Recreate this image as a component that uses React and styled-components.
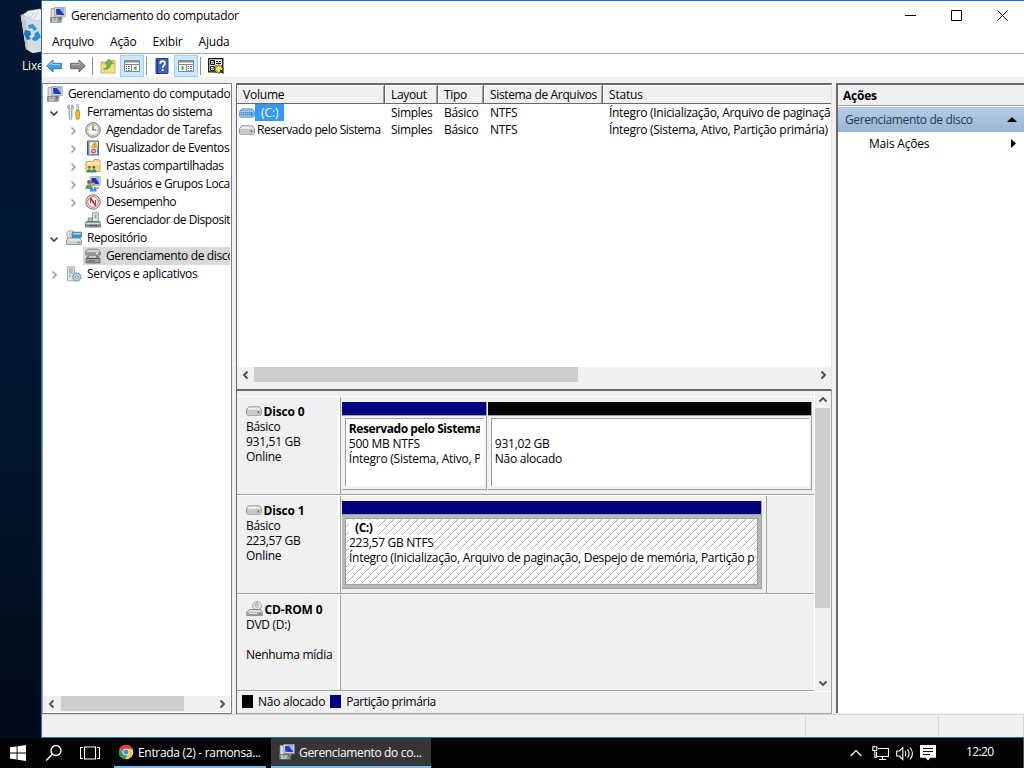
import React from 'react';
import styled, { createGlobalStyle } from 'styled-components';

const tree = [
    { label: 'Gerenciamento do computador', icon: 'computer', level: 0, ls: -0.36 },
    { label: 'Ferramentas do sistema', icon: 'tools', level: 1, arrow: 'open', ls: -0.46 },
    { label: 'Agendador de Tarefas', icon: 'clock', level: 2, arrow: 'closed', ls: -0.4 },
    { label: 'Visualizador de Eventos', icon: 'events', level: 2, arrow: 'closed', ls: -0.38 },
    { label: 'Pastas compartilhadas', icon: 'shared', level: 2, arrow: 'closed', ls: -0.42 },
    { label: 'Usuários e Grupos Locais', icon: 'users', level: 2, arrow: 'closed', ls: -0.4 },
    { label: 'Desempenho', icon: 'perf', level: 2, arrow: 'closed', ls: -0.5 },
    { label: 'Gerenciador de Dispositivos', icon: 'devices', level: 2, ls: -0.46 },
    { label: 'Repositório', icon: 'storage', level: 1, arrow: 'open', ls: -0.4 },
    { label: 'Gerenciamento de disco', icon: 'diskmgmt', level: 2, selected: true, ls: -0.36 },
    { label: 'Serviços e aplicativos', icon: 'services', level: 1, arrow: 'closed' },
]

const columns = ['Volume', 'Layout', 'Tipo', 'Sistema de Arquivos', 'Status']

const volumes = [
    { name: '(C:)', layout: 'Simples', type: 'Básico', fs: 'NTFS', status: 'Íntegro (Inicialização, Arquivo de paginação', selected: true },
    { name: 'Reservado pelo Sistema', layout: 'Simples', type: 'Básico', fs: 'NTFS', status: 'Íntegro (Sistema, Ativo, Partição primária)' },
]

function Icon({ name }) {
    return (
        <Svg16 viewBox="0 0 16 16">
            {icons[name]}
        </Svg16>
    )
}

const icons = {
    computer: <>
        <path d="M1 1.5h4v9H1z" fill="#d8dcdc" stroke="#89908f" strokeWidth=".7" />
        <path d="M4.5.6 15.3.2v9.6L5 9.2z" fill="#dcdcd2" stroke="#92958e" strokeWidth=".7" />
        <path d="M6 1.9 14 1.5v6.8L6.3 7.7z" fill="#1f38c4" />
        <path d="M9.5 1.7 14 1.5v6z" fill="#92b6ff" />
        <path d="M8 10h4l1 2H7z" fill="#929b99" />
        <path d="M.5 10.5h10.8v4.8H.5z" fill="#8c9898" stroke="#66716f" strokeWidth=".6" />
        <path d="M2 12h2M5.5 12h2M2 14h5.5" stroke="#e8efed" />
        <path d="M9 12h1.5" stroke="#3d4746" />
    </>,
    tools: <>
        <path d="M3.3.8v3.4l1.2.9 1.3-.9V.8c1.8.8 2.3 3.5.1 5.1v8.3c0 1.6-2.7 1.6-2.7 0V5.9C.9 4.5 1.5 1.5 3.3.8z" fill="#e3e6e7" stroke="#747e82" strokeWidth=".8" />
        <path d="M10.8.5h1.6v6h-1.6z" fill="#eef0f1" stroke="#7a8388" strokeWidth=".6" />
        <path d="M10.3 6.5h2.8l.5 3-.6 5.5h-2.7L9.7 9z" fill="#ffbe18" stroke="#b97507" strokeWidth=".8" />
    </>,
    clock: <>
        <circle cx="8" cy="8" r="7.3" fill="#d7d7d2" stroke="#777b7b" />
        <circle cx="8" cy="8" r="5.4" fill="#faf8e8" stroke="#b8ad91" strokeWidth=".7" />
        <path d="M8 3.6V8h3.5" stroke="#3b5d83" strokeWidth="1.2" fill="none" />
        <path d="M8 2.7v.8M8 12.5v.8M2.8 8h.8M12.5 8h.8" stroke="#87765a" strokeWidth=".8" />
    </>,
    events: <>
        <path d="M2.5 1h11v14h-11z" fill="#a9c7e6" stroke="#4a6687" />
        <path d="M5 2h8v12H5z" fill="#dfebf6" />
        <path d="M2 3h2M2 5h2M2 7h2M2 9h2M2 11h2M2 13h2" stroke="#354b66" />
        <path d="m9.8 1.6 3.3 5.8H6.5z" fill="#ffd630" stroke="#c98d00" strokeWidth=".6" />
        <path d="M9.8 3.6v2M9.8 6v.8" stroke="#40360e" strokeWidth=".8" />
        <circle cx="8.5" cy="11" r="2.6" fill="#d65a55" />
        <path d="m7.4 9.9 2.2 2.2m0-2.2-2.2 2.2" stroke="#fff" strokeWidth=".8" />
        <path d="M12 8.5h2v5h-2z" fill="#557fb9" />
    </>,
    shared: <>
        <path d="M1 3.5h7l1-2h5l1 2v10H1z" fill="#f6d785" stroke="#be9544" strokeWidth=".8" />
        <path d="M2 4.5h12.5v2H2z" fill="#fff0bd" />
        <circle cx="4.3" cy="9.3" r="1.4" fill="#965f35" />
        <circle cx="8.8" cy="9.3" r="1.4" fill="#78502f" />
        <path d="M1.6 14.4c0-4.3 5.2-4.3 5.2 0z" fill="#3d9254" />
        <path d="M6.4 14.4c0-4.3 5.2-4.3 5.2 0z" fill="#3e77bc" />
    </>,
    users: <>
        <path d="M5 .8 15.2.4v9.3L5 9.2z" fill="#d8d9d2" stroke="#989c94" strokeWidth=".7" />
        <path d="M6.4 2 14 1.7v6.6L6.5 7.9z" fill="#1733bd" />
        <path d="m10.3 1.8 3.7-.1v5.5z" fill="#8fb5ff" />
        <path d="M9 11h5v2H9z" fill="#a9aca7" />
        <circle cx="4" cy="6" r="2" fill="#9a622b" />
        <path d="M.4 13c0-6.4 7.2-6.4 7.2 0z" fill="#4fa377" />
        <circle cx="8.3" cy="8.3" r="2" fill="#d29d68" />
        <path d="M4.8 15.5c0-6 7-6 7 0z" fill="#4b88d0" />
        <path d="m7.5 11 .8 3 .8-3z" fill="#fff" />
    </>,
    perf: <>
        <circle cx="8" cy="8" r="7.2" fill="#e8e6e3" stroke="#71706e" />
        <circle cx="8" cy="8" r="5.3" fill="#fff" stroke="#b5504e" strokeWidth=".8" />
        <path d="M4.8 4.6 6 5v3.6l-1.2.8z" fill="#cd3833" />
        <path d="m9.8 5.6 1.4.6v3.2l-1.2.8z" fill="#cd3833" />
        <path d="m5.4 4 5.2 7.8" stroke="#cd3833" strokeWidth="1.6" />
        <path d="m5.4 4 5.2 7.8" stroke="#2d3031" strokeWidth=".7" />
    </>,
    devices: <>
        <path d="M7.5.8h5.8v9H7.5z" fill="#e1ebe8" stroke="#77827e" strokeWidth=".8" />
        <path d="M9.3 2.5h2.3v4H9.3z" fill="#7cbd88" />
        <path d="M3.2 6h4v4h-4z" fill="#bbc3c5" stroke="#727b7e" strokeWidth=".8" />
        <path d="M1.5 9.5h13l1 2v3.5H.5v-3.5z" fill="#909ba0" stroke="#5d686c" strokeWidth=".8" />
        <path d="M1.3 11.4h13.4" stroke="#dfe7e9" />
        <path d="M4 13.5h8" stroke="#4f5b60" />
    </>,
    storage: <>
        <circle cx="4.6" cy="4.5" r="3.9" fill="#dfe5e2" stroke="#929b96" strokeWidth=".8" />
        <circle cx="4.6" cy="4.5" r="1.2" fill="#fff" stroke="#939a96" strokeWidth=".7" />
        <path d="M6.2 2.2h9.3v5.2H6.2z" fill="#2c9bd2" stroke="#5a7786" strokeWidth=".8" />
        <path d="M7 3h7.8v1.5H7z" fill="#94def7" />
        <path d="M2 8h11.5l2 3v3.5H.5V11z" fill="#e4e6e5" stroke="#7c8280" strokeWidth=".8" />
        <path d="M1 11h14v3H1z" fill="#ced2d1" />
        <path d="M11.5 12.5h2" stroke="#35b24a" strokeWidth="1.5" />
    </>,
    diskmgmt: <>
        <path d="M3 1.2h10l2.3 2.5V7H.8V3.7z" fill="#d2d4d4" stroke="#686b6b" strokeWidth=".8" />
        <path d="M1 4.2h14v2.5H1z" fill="#8d9291" />
        <path d="M11 5.4h2" stroke="#e9ffe9" strokeWidth="1.2" />
        <path d="M3 8h10l2 2.5V15H1v-4.5z" fill="#9a9e9d" stroke="#595c5c" strokeWidth=".8" />
        <path d="M2 10.5h12M3.5 13h6" stroke="#555b59" />
        <path d="M4 8.8h7" stroke="#f6f6f6" />
    </>,
    services: <>
        <path d="M1.5.8h7v14h-7z" fill="#e2e5e5" stroke="#949c9e" strokeWidth=".8" />
        <path d="M3 3h4M3 5h4M3 7h4" stroke="#869195" />
        <path d="M3 10h2" stroke="#50ad61" />
        <circle cx="10.8" cy="11" r="4.1" fill="#8eb4d2" stroke="#7294ad" strokeWidth="1.3" strokeDasharray="1.5 1" />
        <circle cx="10.8" cy="11" r="3.2" fill="#b8d4e8" />
        <circle cx="10.8" cy="11" r="1.4" fill="#fff" stroke="#6389a6" strokeWidth=".8" />
    </>,
    back: <>
        <path d="M.7 8 7 2v3.3h8.3v5.4H7V14z" fill="#35a5e6" stroke="#3a6f9c" />
        <path d="M2.5 7.6 6.2 4v2.4h8" stroke="#9fdcf8" fill="none" />
    </>,
    forward: <>
        <path d="M15.3 8 9 2v3.3H.7v5.4H9V14z" fill="#8b8b8b" stroke="#5f5f5f" />
        <path d="M1.5 6.4h8.2V4l3.6 3.6" stroke="#b7b7b7" fill="none" />
    </>,
    up: <>
        <path d="M1 4h6l1-1.5h7V15H1z" fill="#e9c76b" stroke="#c39b44" strokeWidth=".8" />
        <path d="M1.5 6.5h13v8h-13z" fill="#f4dc8c" />
        <path d="M3.3 11c3-.4 4-2 4-5H5L9 1l4 4.7h-2.2C10.5 9.5 8 12 3.3 11z" fill="#62bd38" stroke="#4a9a35" strokeWidth=".7" />
    </>,
    treeview: <>
        <path d="M.5 2.5h15v11H.5z" fill="#fff" stroke="#85888c" />
        <path d="M1 3h14v1.5H1z" fill="#8c8f94" />
        <path d="M1 6.5h14M7.5 6v8" stroke="#85888c" />
        <path d="M2 8.5h1M4 8.5h2M2 10.5h1M4 10.5h2M2 12.5h1M4 12.5h2" stroke="#6f747b" />
        <path d="M12.500 7.500v5L9.500 10z" fill="#3ca63e" />
    </>,
    actionview: <>
        <path d="M.5 2.5h15v11H.5z" fill="#fff" stroke="#85888c" />
        <path d="M1 3h14v1.5H1z" fill="#8c8f94" />
        <path d="M1 6.5h14M8.5 6v8" stroke="#85888c" />
        <path d="M10 8.5h1M12 8.5h2M10 10.5h1M12 10.5h2M10 12.5h1M12 12.5h2" stroke="#6f747b" />
        <path d="M3.500 7.500v5l3-2.500z" fill="#3ca63e" />
    </>,
    help: <>
        <path d="M2 .5h12v15H2z" fill="#3d5fc0" stroke="#263d8c" />
        <path d="M3.5 1v14" stroke="#263d8c" />
        <path d="M6.2 5.7c0-3.4 4.8-3.2 4.8-.4 0 2.3-2.4 2-2.4 4.7" stroke="#fff" strokeWidth="1.7" fill="none" />
        <path d="M7.7 11.2h1.8V13H7.7z" fill="#fff" />
    </>,
    settings: <>
        <path d="M.7.7h14.1v13.1H.7z" fill="#eee" stroke="#111" strokeWidth="1.3" />
        <path d="M2.5 2.5h4v4h-4zM2.5 8.5h4v4h-4z" fill="#fff" stroke="#111" />
        <path d="m3.500 4.300 1 1 1.500-2M3.500 10.300l1 1 1.500-2M8 3.500h2M11 3.500h2M8 5.500h5" stroke="#111" fill="none" />
        <path d="m7.700 7 2.100 1.600.8-2.100 1.300 1.900 2.300-1.400-.6 2.600 2.200 1.200-2.200 1.200.9 2.500-2.500-.8-1.200 2-1.100-2-2.300.9.7-2.500-1.900-1.300 1.900-1z" fill="#fff33b" stroke="#181800" strokeWidth=".6" />
        <path d="m12 12 3.500 3.500" stroke="#181800" strokeWidth="1.200" />
    </>,
}

function Drive({ blue }) {
    return (
        <DriveSvg viewBox="0 0 16 10">
            <path d="M2.8.8h10.5l2.1 3v4.5l-1 .9H1.500l-1-.9V3.800z" fill={blue ? '#a5cdee' : '#eeeeec'} stroke={blue ? '#4f8fc4' : '#777'} strokeWidth=".8" />
            <path d="M1 3.800h14v4.700H1z" fill={blue ? '#7db4e2' : '#c7c8c7'} />
            <path d="M12.500 5v2.500" stroke={blue ? '#2b719f' : '#429447'} strokeWidth="1.500" />
            {blue && <path d="M2 2.500h12M2 4.500h12M2 6.500h12" stroke="#4a90d0" strokeDasharray="1 1" />}
        </DriveSvg>
    )
}

function CdDrive() {
    return (
        <CdSvg viewBox="0 0 17 16">
            <circle cx="11" cy="5" r="4.5" fill="#e1e3e0" stroke="#9da19e" strokeWidth=".8" />
            <path d="M11 .8v3M8 2.4l2 2" stroke="#7bc181" />
            <circle cx="11" cy="5" r="1.3" fill="#fff" stroke="#8f9691" strokeWidth=".7" />
            <path d="M3.5 8.5h11l1.8 2.5v3.6H.7V11z" fill="#dededc" stroke="#6f7371" strokeWidth=".8" />
            <path d="M1.2 11.4h14.6V14H1.2z" fill="#9ea2a0" />
            <path d="M3 12.5h8" stroke="#e3e6e4" />
            <path d="M13 12.5h1.8" stroke="#21a739" strokeWidth="1.4" />
        </CdSvg>
    )
}

const arrows = {
    left: 'M6.5 1.5 3 5l3.5 3.5',
    right: 'M3.5 1.5 7 5 3.5 8.5',
    up: 'M1.5 6.5 5 3l3.5 3.5',
    down: 'M1.5 3.5 5 7l3.5-3.5',
}

function Chevron({ dir, color = '#505050', thick = 1.9 }) {
    return (
        <svg width="10" height="10" viewBox="0 0 10 10">
            <path d={arrows[dir]} fill="none" stroke={color} strokeWidth={thick} />
        </svg>
    )
}

function Tree() {
    return (
        <TreePane>
            <TreeList>
                {tree.map((item) => (
                    <TreeRow key={item.label} $level={item.level}>
                        {item.level > 0 && (
                            <Twisty>
                                {item.arrow && <Chevron dir={item.arrow === 'open' ? 'down' : 'right'} color={item.arrow === 'open' ? '#404040' : '#a0a0a0'} thick={1.7} />}
                            </Twisty>
                        )}
                        <TreeItem $selected={item.selected}>
                            <Icon name={item.icon} />
                            <TreeLabel $ls={item.ls}>{item.label}</TreeLabel>
                        </TreeItem>
                    </TreeRow>
                ))}
            </TreeList>
            <HScroll>
                <HArrow><Chevron dir="left" /></HArrow>
                <HTrack><HThumb $width={123} $offset={1} /></HTrack>
                <HArrow><Chevron dir="right" /></HArrow>
            </HScroll>
        </TreePane>
    )
}

function VolumeList() {
    return (
        <VolumePane>
            <VolumeGrid>
                {columns.map((c) => <HeadCell key={c}>{c}</HeadCell>)}
            </VolumeGrid>
            {volumes.map((v) => (
                <VolumeGrid key={v.name}>
                    <NameCell>
                        <Drive blue={v.selected} />
                        <VolumeName $selected={v.selected}>{v.name}</VolumeName>
                    </NameCell>
                    <Cell>{v.layout}</Cell>
                    <Cell>{v.type}</Cell>
                    <Cell>{v.fs}</Cell>
                    <Cell>{v.status}</Cell>
                </VolumeGrid>
            ))}
            <Spacer />
            <HScroll>
                <HArrow><Chevron dir="left" /></HArrow>
                <HTrack><HThumb $width={324} $offset={0} /></HTrack>
                <HArrow><Chevron dir="right" /></HArrow>
            </HScroll>
        </VolumePane>
    )
}

function Hatch() {
    return (
        <HatchSvg>
            <defs>
                <pattern id="hatch" width="8" height="8" patternUnits="userSpaceOnUse">
                    <path d="M-1 9 9-1M-1 1 1-1M7 9l2-2" stroke="#8c8c8c" strokeWidth=".75" />
                </pattern>
            </defs>
            <rect width="100%" height="100%" fill="url(#hatch)" />
        </HatchSvg>
    )
}

function DiskView() {
    return (
        <DiskPane>
            <DiskArea>
                <DiskRows>
                    <DiskRow>
                        <DiskInfo>
                            <DiskTitle><Drive /><b>Disco 0</b></DiskTitle>
                            <p>Básico</p>
                            <p>931,51 GB</p>
                            <p>Online</p>
                        </DiskInfo>
                        <Partitions $width={474}>
                            <Partition $width={145}>
                                <Bar $color="#000080" />
                                <PartBox>
                                    <PartText>
                                        <p><b>Reservado pelo Sistema</b></p>
                                        <p>500 MB NTFS</p>
                                        <p>Íntegro (Sistema, Ativo, Partição</p>
                                    </PartText>
                                </PartBox>
                            </Partition>
                            <Partition $width={324}>
                                <Bar $color="#000" />
                                <PartBox>
                                    <PartText>
                                        <p>&nbsp;</p>
                                        <p>931,02 GB</p>
                                        <p>Não alocado</p>
                                    </PartText>
                                </PartBox>
                            </Partition>
                        </Partitions>
                    </DiskRow>
                    <DiskRow>
                        <DiskInfo>
                            <DiskTitle><Drive /><b>Disco 1</b></DiskTitle>
                            <p>Básico</p>
                            <p>223,57 GB</p>
                            <p>Online</p>
                        </DiskInfo>
                        <Partitions $width={426} $edge>
                            <Partition $width={420}>
                                <Bar $color="#000080" />
                                <PartBox $active>
                                    <Hatch />
                                    <PartText $active>
                                        <p><DriveLetter>(C:)</DriveLetter></p>
                                        <p>223,57 GB NTFS</p>
                                        <p>Íntegro (Inicialização, Arquivo de paginação, Despejo de memória, Partição primária)</p>
                                    </PartText>
                                </PartBox>
                            </Partition>
                        </Partitions>
                    </DiskRow>
                    <DiskRow>
                        <DiskInfo>
                            <DiskTitle><CdDrive /><b>CD-ROM 0</b></DiskTitle>
                            <p>DVD (D:)</p>
                            <p>&nbsp;</p>
                            <p>Nenhuma mídia</p>
                        </DiskInfo>
                        <Partitions $width={474} />
                    </DiskRow>
                </DiskRows>
                <VScroll>
                    <VArrow><Chevron dir="up" /></VArrow>
                    <VTrack><VThumb /></VTrack>
                    <VArrow><Chevron dir="down" /></VArrow>
                </VScroll>
            </DiskArea>
            <Legend>
                <Swatch $color="#000" /><Label $ls={-0.25}>Não alocado</Label>
                <Swatch $color="#000080" /><Label $ls={-0.4}>Partição primária</Label>
            </Legend>
        </DiskPane>
    )
}

function Actions() {
    return (
        <ActionsPane>
            <ActionsTitle>Ações</ActionsTitle>
            <ActionsGroup>
                <Label $ls={-0.38}>Gerenciamento de disco</Label>
                <svg width="10" height="5"><path d="M5 0l5 5H0z" fill="#000" /></svg>
            </ActionsGroup>
            <ActionItem>
                <Label $ls={-0.2}>Mais Ações</Label>
                <svg width="5" height="9"><path d="M0 0l5 4.5L0 9z" fill="#000" /></svg>
            </ActionItem>
        </ActionsPane>
    )
}

function RecycleBin() {
    return (
        <svg width="40" height="46" viewBox="0 0 40 46">
            <path d="M.5 7 14 2l24 3-6 37-20 3-6-4z" fill="#aeb9bf" />
            <path d="m1 8 14 3 21-4-6 35-17 3-7-4z" fill="#d6dde1" />
            <path d="m3 7 5-4 6-1 6-1 5 3 8-2-8 9-9 2-9-4z" fill="#eff2f4" stroke="#b4bfc6" strokeWidth=".7" />
            <path d="m6 6 5 3 3-5M14 11l4-7" stroke="#c5ced4" fill="none" />
            <path d="m1 8 5 5 2 29-2-1z" fill="#bcc7ce" />
            <path d="m8 17 5-1 4 5-3 2-2-3-3 1z" fill="#2f97dc" />
            <path d="m5 22 5 1 1 4-2 1 2 3-4 1-3-6z" fill="#1675bd" />
            <path d="m14 26 4-3 3 6-5 4-4-1 1-3 2-1z" fill="#298fd6" />
        </svg>
    )
}

function Taskbar() {
    return (
        <Bottom>
            <StartButton>
                <svg width="16" height="16"><path d="M0 2.3 6.6 1.4v6H0zM7.5 1.2 16 0v7.4H7.5zM0 8.4h6.6v6.1L0 13.6zM7.5 8.4H16V16l-8.5-1.2z" fill="#fff" /></svg>
            </StartButton>
            <SearchButton>
                <svg width="18" height="18"><g fill="none" stroke="#fff" strokeWidth="1.4"><circle cx="11" cy="6.5" r="5" /><path d="M7.5 10 1.2 16.4" /></g></svg>
            </SearchButton>
            <TaskViewButton>
                <svg width="20" height="16"><g fill="none" stroke="#fff" strokeWidth="1.1"><path d="M4.5 2h11v12h-11zM3 2.5H.5v11H3M17 2.500h2.500v11H17" /></g></svg>
            </TaskViewButton>
            <Task $width={152}>
                <svg width="16" height="16" viewBox="0 0 16 16">
                    <circle cx="8" cy="8" r="7" fill="#fff" />
                    <path d="M1.600 4.700A7.200 7.200 0 0 1 14.500 5H8a3.200 3.200 0 0 0-3 4z" fill="#e64435" />
                    <path d="M14.500 5A7.200 7.200 0 0 1 7.200 15.200l3.400-5.500A3.300 3.300 0 0 0 9.500 5z" fill="#fbc92f" />
                    <path d="M1.600 4.700A7.200 7.200 0 0 0 7.200 15.200L10 10.500a3.300 3.300 0 0 1-5-1z" fill="#2ba24c" />
                    <circle cx="8" cy="8" r="3.300" fill="#fff" /><circle cx="8" cy="8" r="2.600" fill="#4686ed" />
                </svg>
                <Label $ls={-0.31}>Entrada (2) - ramonsa...</Label>
            </Task>
            <Task $width={160} $active>
                <Icon name="computer" />
                <Label $ls={-0.33}>Gerenciamento do co...</Label>
            </Task>
            <Spacer />
            <Tray>
                <TrayArrow width="12" height="8"><path d="m.7 7 5.300-5.300L11.300 7" fill="none" stroke="#fff" strokeWidth="1.200" /></TrayArrow>
                <svg width="18" height="15"><g fill="none" stroke="#fff" strokeWidth="1.100"><path d="M6 2.500h10.500v8h-12V6M10.500 10.500v3M7 13.500h7M.8.800h4v3.700h-4zM2.800 4.500v6.700H5" /></g></svg>
                <svg width="18" height="15"><g fill="none" stroke="#fff" strokeWidth="1.100"><path d="M.7 5h2.600l3.500-3.500v12L3.300 10H.700zM9 5c1 1.600 1 3.400 0 5M11.500 3.300c2 2.700 2 5.700 0 8.400M14 1.500c3 3.700 3 8.300 0 12" /></g></svg>
                <svg width="16" height="16"><path d="M0 0h16v12.700h-5.500L8 15.500l-2.500-2.800H0z" fill="#fff" /><path d="M3 3.500h10M3 6.500h10M3 9.500h7" stroke="#000" /></svg>
            </Tray>
            <Clock>12:20</Clock>
        </Bottom>
    )
}

export default function App() {
    return (
        <Screen>
            <Global />
            <Work>
                <Desktop>
                    <RecycleBin />
                    <span>Lixeira</span>
                </Desktop>
                <Window>
                    <TitleBar>
                        <Icon name="computer" />
                        <Title>Gerenciamento do computador</Title>
                        <WinButton><svg width="11" height="11"><path d="M0 5.500h11" stroke="#000" /></svg></WinButton>
                        <WinButton><svg width="11" height="11"><path d="M.5.500h10v10H.500z" fill="none" stroke="#000" /></svg></WinButton>
                        <WinButton><svg width="11" height="11"><path d="m.500.500 10 10m0-10-10 10" stroke="#000" /></svg></WinButton>
                    </TitleBar>
                    <MenuBar>
                        <span>Arquivo</span>
                        <span>Ação</span>
                        <span>Exibir</span>
                        <span>Ajuda</span>
                    </MenuBar>
                    <Toolbar>
                        <Tool><Icon name="back" /></Tool>
                        <Tool><Icon name="forward" /></Tool>
                        <Divider />
                        <Tool><Icon name="up" /></Tool>
                        <Tool $on><Icon name="treeview" /></Tool>
                        <Divider />
                        <Tool><Icon name="help" /></Tool>
                        <Tool $on><Icon name="actionview" /></Tool>
                        <Divider />
                        <Tool><Icon name="settings" /></Tool>
                    </Toolbar>
                    <Panes>
                        <Tree />
                        <Middle>
                            <VolumeList />
                            <DiskView />
                        </Middle>
                        <Actions />
                    </Panes>
                    <StatusBar>
                        <StatusCell $width={764} />
                        <StatusCell $width={133} />
                        <StatusCell $width={85} />
                    </StatusBar>
                </Window>
            </Work>
            <Taskbar />
        </Screen>
    );
}

const Global = createGlobalStyle`
* { box-sizing: border-box; }
body {
    margin: 0;
    overflow: hidden;
    font: 12px/15px "Open Sans", "Noto Sans", sans-serif;
    letter-spacing: -0.33px;
    color: #000;
}
p { margin: 0; }
b { letter-spacing: -0.42px; }
svg { display: block; flex: none; }
`

const Screen = styled.div`
display: flex;
flex-direction: column;
width: 1024px;
height: 768px;
overflow: hidden;
`

const Work = styled.div`
display: flex;
height: 738px;
`

const Desktop = styled.div`
width: 41px;
padding: 8px 0 0 20px;
overflow: hidden;
color: #fff;
white-space: nowrap;
letter-spacing: -0.2px;
background: linear-gradient(180deg, #021630 0%, #021934 30%, #01152c 60%, #010b19 100%);
span {
    display: block;
    margin: 4px 0 0 2px;
    text-shadow: 1px 1px 2px #000;
}
`

const Window = styled.div`
display: flex;
flex-direction: column;
width: 983px;
background: #f0f0f0;
border: solid #2272b9;
border-width: 1px 0 1px 1px;
`

const TitleBar = styled.div`
display: flex;
align-items: center;
height: 30px;
padding: 0 0 2px 8px;
background: #fff;
`

const Title = styled.div`
flex: 1;
margin-left: 5px;
padding-top: 1px;
`

const WinButton = styled.div`
display: flex;
justify-content: center;
width: 46px;
padding-left: 3px;
`

const MenuBar = styled.div`
display: flex;
gap: 16px;
height: 22px;
padding: 3px 10px;
background: #fff;
letter-spacing: -0.2px;
`

const Toolbar = styled.div`
display: flex;
align-items: center;
height: 24px;
background: #fff;
border-top: 1px solid #a6a6a6;
`

const Tool = styled.div`
display: flex;
align-items: center;
justify-content: center;
width: ${p => p.$on ? 24 : 24}px;
height: 22px;
border: 1px solid ${p => p.$on ? '#99d1ff' : 'transparent'};
background: ${p => p.$on ? '#cce8ff' : 'none'};
`

const Divider = styled.div`
width: 1px;
height: 18px;
margin: 0 3px 0 2px;
background: #8c8c8c;
`

const Panes = styled.div`
display: flex;
height: 631px;
margin-top: 6px;
`

const TreePane = styled.div`
display: flex;
flex-direction: column;
width: 190px;
margin-right: 4px;
padding: 0 1px 1px 0;
background: #fff;
border: 1px solid #7a7f88;
border-left-color: #a0a0a0;
`

const TreeList = styled.div`
flex: 1;
padding-top: 1px;
overflow: hidden;
`

const TreeRow = styled.div`
display: flex;
height: 18px;
padding-left: ${p => [2, 4, 23][p.$level]}px;
`

const Twisty = styled.div`
display: flex;
align-items: center;
width: 17px;
padding: 1px 0 0 2px;
`

const TreeItem = styled.div`
display: flex;
flex: 1;
align-items: center;
padding-left: 2px;
overflow: hidden;
white-space: nowrap;
gap: 5px;
background: ${p => p.$selected ? '#d9d9d9' : 'none'};
`

const Label = styled.span`
white-space: nowrap;
letter-spacing: ${p => p.$ls ?? -0.33}px;
`

const TreeLabel = styled(Label)`
padding-bottom: 1px;
`

const Svg16 = styled.svg`
width: 16px;
height: 16px;
`

const DriveSvg = styled.svg`
width: 16px;
height: 10px;
`

const CdSvg = styled.svg`
width: 17px;
height: 16px;
`

const HScroll = styled.div`
display: flex;
align-items: center;
height: 16px;
background: #f0f0f0;
`

const HArrow = styled.div`
display: flex;
justify-content: center;
width: 17px;
`

const HTrack = styled.div`
flex: 1;
height: 16px;
`

const HThumb = styled.div`
width: ${p => p.$width}px;
height: 15px;
margin-left: ${p => p.$offset}px;
background: #cdcdcd;
`

const Middle = styled.div`
display: flex;
flex-direction: column;
width: 596px;
border: solid #696969;
border-width: 1px 0 0 1px;
`

const VolumePane = styled.div`
display: flex;
flex-direction: column;
height: 307px;
padding-bottom: 6px;
background: linear-gradient(#fff 298px, #f0f0f0 298px);
border: solid #696969;
border-width: 1px 1px 2px 0;
border-right-color: #e3e3e3;
`

const VolumeGrid = styled.div`
display: grid;
grid-template-columns: 148px 53px 46px 119px 1fr;
overflow: hidden;
white-space: nowrap;
`

const HeadCell = styled.div`
height: 19px;
padding: 2px 0 0 6px;
background: #f0f0f0;
border: solid #696969;
border-width: 0 1px 1px 0;
box-shadow: inset 1px 1px #fff, inset -1px 0 #a0a0a0;
letter-spacing: -0.35px;
&:first-child, &:last-child {
    letter-spacing: -0.2px;
}
&:last-child {
    border-right: 0;
    box-shadow: inset 1px 1px #fff;
}
`

const Cell = styled.div`
height: 17px;
padding: 1px 0 0 6px;
overflow: hidden;
letter-spacing: -0.3px;
`

const NameCell = styled.div`
display: flex;
align-items: center;
height: 17px;
padding-left: 2px;
`

const VolumeName = styled.div`
height: 17px;
padding: 1px ${p => p.$selected ? '6px 0 6px' : '2px 0 2px'};
letter-spacing: ${p => p.$selected ? -0.1 : -0.44}px;
color: ${p => p.$selected ? '#fff' : '#000'};
background: ${p => p.$selected ? '#3399ff' : 'none'};
`

const Spacer = styled.div`
flex: 1;
`

const DiskPane = styled.div`
display: flex;
flex: 1;
flex-direction: column;
border: solid #a0a0a0;
border-width: 0 1px 1px 0;
`

const DiskArea = styled.div`
display: flex;
height: 300px;
`

const DiskRows = styled.div`
width: 578px;
padding-top: 5px;
border-right: 1px solid #fff;
`

const DiskRow = styled.div`
display: flex;
height: 99px;
border-top: 1px solid #fff;
border-bottom: 1px solid #a0a0a0;
&:last-child {
    height: 97px;
}
`

const DiskInfo = styled.div`
width: 104px;
padding: 6px 0 0 9px;
border-right: 1px solid #a0a0a0;
box-shadow: inset -2px 0 #fff;
white-space: nowrap;
letter-spacing: -0.28px;
`

const DiskTitle = styled.div`
display: flex;
height: 16px;
align-items: center;
gap: 1px;
padding-bottom: 1px;
b {
    padding-top: 2px;
    letter-spacing: -0.15px;
}
svg + b {
    margin-left: .5px;
}
`

const Partitions = styled.div`
display: flex;
width: ${p => p.$width}px;
padding: 5px 0 4px 1px;
gap: 1px;
border-right: ${p => p.$edge ? '1px solid #a0a0a0' : 0};
`

const Partition = styled.div`
display: flex;
flex-direction: column;
width: ${p => p.$width}px;
border-right: 1px solid #a0a0a0;
border-bottom: 1px solid #a0a0a0;
`

const Bar = styled.div`
height: 14px;
background: ${p => p.$color};
border-bottom: 1px solid #a0a0a0;
`

const PartBox = styled.div`
position: relative;
flex: 1;
margin: ${p => p.$active ? 0 : '2px 2px 3px 3px'};
padding: ${p => p.$active ? '2px 4px' : '2px 4px 2px 3px'};
overflow: hidden;
background: #fff;
border: solid #a0a0a0;
border-width: 1px 0 0 1px;
${p => p.$active && 'border: solid #b8b8b8; border-width: 3px;'}
`

const PartText = styled.div`
position: relative;
overflow: hidden;
white-space: nowrap;
letter-spacing: ${p => p.$active ? -0.28 : -0.25}px;
p {
    width: ${p => p.$active ? 'fit-content' : 'auto'};
    background: #fff;
}
`

const DriveLetter = styled.b`
padding: 0 5px 0 6px;
`

const HatchSvg = styled.svg`
position: absolute;
top: 0;
left: 0;
width: 100%;
height: 100%;
border: 1px solid #a0a0a0;
`

const VScroll = styled.div`
display: flex;
flex-direction: column;
width: 16px;
padding-right: 1px;
`

const VArrow = styled.div`
display: flex;
align-items: center;
justify-content: center;
height: 17px;
`

const VTrack = styled.div`
flex: 1;
`

const VThumb = styled.div`
height: 200px;
background: #cdcdcd;
`

const Legend = styled.div`
display: flex;
flex: 1;
align-items: center;
gap: 5px;
padding: 0 0 2px 5px;
border-top: 1px solid #fff;
`

const Swatch = styled.div`
width: 11px;
height: 13px;
background: ${p => p.$color};
`

const ActionsPane = styled.div`
flex: 1;
margin-left: 4px;
height: 630px;
background: #fff;
border: solid #696969;
border-width: 2px 0 0 2px;
`

const ActionsTitle = styled.div`
height: 21px;
padding: 3px 5px 0;
font-weight: 700;
letter-spacing: -0.25px;
background: #f0f0f0;
border-bottom: 1px solid #a0a0a0;
`

const ActionsGroup = styled.div`
display: flex;
align-items: center;
justify-content: space-between;
height: 25px;
margin-top: 1px;
padding: 0 7px;
color: #1e395b;
background: linear-gradient(#b8cde6, #98b4d4);
`

const ActionItem = styled.div`
display: flex;
align-items: center;
justify-content: space-between;
height: 23px;
padding: 0 8px 0 31px;
`

const StatusBar = styled.div`
display: flex;
flex: 1;
border-top: 1px solid #d7d7d7;
`

const StatusCell = styled.div`
width: ${p => p.$width}px;
height: 20px;
margin-top: 1px;
border-right: 1px solid #d7d7d7;
`

const Bottom = styled.div`
display: flex;
height: 30px;
color: #fff;
background: #010305;
`

const StartButton = styled.div`
width: 36px;
padding: 7px 10px;
`

const SearchButton = styled.div`
width: 36px;
padding: 6px 9px;
`

const TaskViewButton = styled.div`
width: 42px;
padding: 7px 8px;
`

const Task = styled.div`
display: flex;
align-items: center;
width: ${p => p.$width}px;
height: 30px;
margin-right: 5px;
padding-left: ${p => p.$active ? 8 : 4}px;
gap: 4px;
border-bottom: 2px solid #76b9ed;
background: ${p => p.$active ? '#343638' : 'none'};
`

const Tray = styled.div`
display: flex;
align-items: center;
gap: 6px;
margin-right: 30px;
`

const TrayArrow = styled.svg`
margin-right: 4px;
`

const Clock = styled.div`
width: 58px;
padding-top: 6px;
letter-spacing: -0.6px;
border-right: 1px solid #555;
`
